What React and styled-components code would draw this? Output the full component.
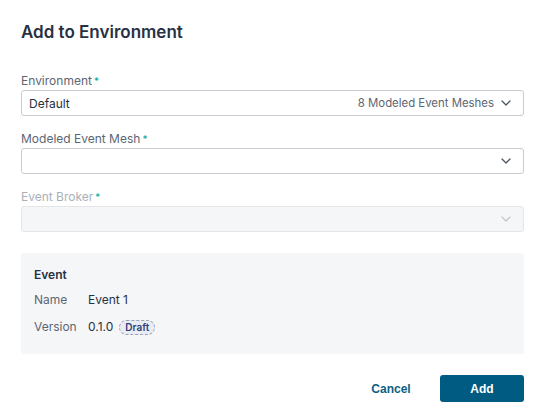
import React from "react";
import styled, { createGlobalStyle } from "styled-components";

const GlobalStyle = createGlobalStyle`
  body {
    margin: 0;
    background: #ffffff;
    font-family: "Inter", "Noto Sans", sans-serif;
    color: #273142;
  }
`;

function Chevron({ disabled }) {
  return (
    <svg width="10" height="6" viewBox="0 0 10 6" fill="none">
      <path
        d="M1 1l4 4 4-4"
        stroke={disabled ? "#c3c7ce" : "#4b5563"}
        strokeWidth="1.3"
        strokeLinecap="round"
        strokeLinejoin="round"
      />
    </svg>
  );
}

function SelectField({ label, value, hint, disabled }) {
  return (
    <Field>
      <Label disabled={disabled}>
        {label}
        <Star>*</Star>
      </Label>
      <SelectBox disabled={disabled}>
        <span>{value}</span>
        <Right>
          {hint && <Hint>{hint}</Hint>}
          <Chevron disabled={disabled} />
        </Right>
      </SelectBox>
    </Field>
  );
}

function App() {
  return (
    <Dialog>
      <GlobalStyle />
      <Title>Add to Environment</Title>
      <Fields>
        <SelectField label="Environment" value="Default" hint="8 Modeled Event Meshes" />
        <SelectField label="Modeled Event Mesh" value="" />
        <SelectField label="Event Broker" value="" disabled />
      </Fields>
      <EventPanel>
        <PanelTitle>Event</PanelTitle>
        <InfoRow>
          <InfoKey>Name</InfoKey>
          <InfoValue>Event 1</InfoValue>
        </InfoRow>
        <InfoRow>
          <InfoKey>Version</InfoKey>
          <InfoValue>
            0.1.0
            <Badge>Draft</Badge>
          </InfoValue>
        </InfoRow>
      </EventPanel>
      <Footer>
        <Button>Cancel</Button>
        <Button primary>Add</Button>
      </Footer>
    </Dialog>
  );
}

const Dialog = styled.div`
  width: 544px;
  height: 420px;
  box-sizing: border-box;
  padding: 20px 20px 0 21px;
  display: flex;
  flex-direction: column;
`;

const Title = styled.h1`
  margin: 0;
  font-size: 17px;
  line-height: 24px;
  font-weight: 600;
  color: #273142;
`;

const Fields = styled.div`
  margin-top: 30px;
  display: flex;
  flex-direction: column;
  gap: 16px;
`;

const Field = styled.div`
  display: flex;
  flex-direction: column;
  gap: 2px;
`;

const Label = styled.label`
  font-size: 12px;
  line-height: 14px;
  color: ${(p) => (p.disabled ? "#aab0b9" : "#5c6673")};
`;

const Star = styled.span`
  color: #00a8a0;
  margin-left: 2px;
  font-size: 10px;
  vertical-align: top;
`;

const SelectBox = styled.div`
  height: 26px;
  box-sizing: border-box;
  border: 1px solid ${(p) => (p.disabled ? "#e3e5e9" : "#c7cbd2")};
  background: ${(p) => (p.disabled ? "#f5f6f8" : "#ffffff")};
  border-radius: 3px;
  display: flex;
  align-items: center;
  justify-content: space-between;
  padding: 0 12px 0 7px;
  font-size: 12px;
  color: #273142;
`;

const Right = styled.div`
  display: flex;
  align-items: center;
  gap: 7px;
`;

const Hint = styled.span`
  color: #5c6673;
  font-size: 11.4px;
`;

const EventPanel = styled.div`
  margin-top: 21px;
  background: #f5f6f8;
  border-radius: 3px;
  padding: 14px 13px 19px;
  display: flex;
  flex-direction: column;
  gap: 11px;
`;

const PanelTitle = styled.div`
  font-size: 12px;
  line-height: 16px;
  font-weight: 600;
  color: #273142;
  margin-bottom: -2px;
`;

const InfoRow = styled.div`
  display: flex;
  align-items: center;
  font-size: 12px;
  line-height: 16px;
`;

const InfoKey = styled.span`
  width: 54px;
  color: #5c6673;
`;

const InfoValue = styled.span`
  display: flex;
  align-items: center;
  gap: 6px;
  color: #273142;
`;

const Badge = styled.span`
  display: inline-flex;
  align-items: center;
  height: 13px;
  padding: 0 5px;
  border: 1px dashed #9aa2b6;
  border-radius: 8px;
  background: #e9ecf3;
  font-size: 10px;
  font-weight: 600;
  color: #2f3f7a;
`;

const Footer = styled.div`
  margin-top: 21px;
  display: flex;
  justify-content: flex-end;
  gap: 7px;
`;

const Button = styled.button`
  width: 84px;
  height: 27px;
  border: none;
  border-radius: 3px;
  background: ${(p) => (p.primary ? "#005b82" : "transparent")};
  color: ${(p) => (p.primary ? "#ffffff" : "#0b5f85")};
  font-family: "Liberation Sans", Arial, sans-serif;
  font-weight: 700;
  font-size: 12px;
  cursor: pointer;
`;

export default App;
